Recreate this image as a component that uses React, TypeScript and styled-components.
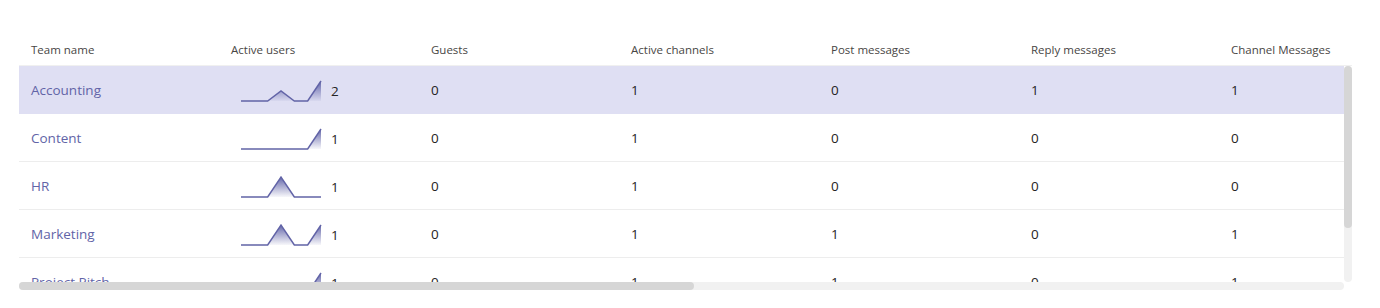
import React from 'react';
import styled, { createGlobalStyle } from 'styled-components';

const GlobalStyle = createGlobalStyle`
  body {
    margin: 0;
    background: #ffffff;
    font-family: 'Open Sans', 'Noto Sans', sans-serif;
    color: #252423;
  }
`;

const COL_W = 200;
const VIEW_W = 1325;
const VIEW_H = 216;
const ROW_H = 48;
const BAR = 8;

interface TeamRow {
  name: string;
  trend: number[];
  activeUsers: number;
  guests: number;
  channels: number;
  posts: number;
  replies: number;
  channelMessages: number;
  urgent: number;
  mentions: number;
  reactions: number;
  meetings: number;
  privacy: string;
  lastActivity: string;
}

const columns = [
  'Team name',
  'Active users',
  'Guests',
  'Active channels',
  'Post messages',
  'Reply messages',
  'Channel Messages',
  'Urgent messages',
  'Mentions',
  'Reactions',
  'Meetings organized',
  'Privacy',
  'Last activity date',
];

const teams: TeamRow[] = [
  { name: 'Accounting', trend: [0, 0, 0, 1, 0, 0, 2], activeUsers: 2, guests: 0, channels: 1, posts: 0, replies: 1, channelMessages: 1, urgent: 0, mentions: 0, reactions: 0, meetings: 0, privacy: 'Private', lastActivity: '3/18/2020' },
  { name: 'Content', trend: [0, 0, 0, 0, 0, 0, 1], activeUsers: 1, guests: 0, channels: 1, posts: 0, replies: 0, channelMessages: 0, urgent: 0, mentions: 0, reactions: 0, meetings: 0, privacy: 'Public', lastActivity: '3/18/2020' },
  { name: 'HR', trend: [0, 0, 0, 1, 0, 0, 0], activeUsers: 1, guests: 0, channels: 1, posts: 0, replies: 0, channelMessages: 0, urgent: 0, mentions: 0, reactions: 0, meetings: 0, privacy: 'Private', lastActivity: '3/15/2020' },
  { name: 'Marketing', trend: [0, 0, 0, 1, 0, 0, 1], activeUsers: 1, guests: 0, channels: 1, posts: 1, replies: 0, channelMessages: 1, urgent: 0, mentions: 1, reactions: 0, meetings: 0, privacy: 'Public', lastActivity: '3/18/2020' },
  { name: 'Project Pitch', trend: [0, 0, 0, 0, 0, 0, 1], activeUsers: 1, guests: 0, channels: 1, posts: 1, replies: 0, channelMessages: 1, urgent: 0, mentions: 0, reactions: 1, meetings: 0, privacy: 'Public', lastActivity: '3/18/2020' },
  { name: 'Sales', trend: [0, 0, 1, 0, 0, 0, 1], activeUsers: 1, guests: 0, channels: 1, posts: 0, replies: 0, channelMessages: 0, urgent: 0, mentions: 0, reactions: 0, meetings: 0, privacy: 'Private', lastActivity: '3/17/2020' },
];

const Page = styled.div`
  padding: 34px 0 0 19px;
`;

const HeaderViewport = styled.div`
  width: ${VIEW_W + BAR}px;
  overflow: hidden;
  border-bottom: 1px solid #f0f0f0;
`;

const Row = styled.div<{ $selected?: boolean }>`
  display: grid;
  grid-template-columns: repeat(${columns.length}, ${COL_W}px);
  width: ${columns.length * COL_W}px;
`;

const HeaderRow = styled(Row)`
  height: 31px;
`;

const HeaderCell = styled.div`
  display: flex;
  align-items: center;
  padding: 0 12px;
  font-size: 11.5px;
  color: #484644;
  white-space: nowrap;
`;

/* body viewport + hand-drawn scrollbars */
const ScrollArea = styled.div`
  display: grid;
  grid-template-columns: ${VIEW_W}px ${BAR}px;
  grid-template-rows: ${VIEW_H}px ${BAR}px;
`;

const Viewport = styled.div`
  overflow: hidden;
`;

const Track = styled.div<{ $vertical?: boolean }>`
  display: flex;
  flex-direction: ${(p) => (p.$vertical ? 'column' : 'row')};
  background: #f1f1f1;
  border-radius: 4px;
`;

const Thumb = styled.div`
  background: #d6d6d6;
  border-radius: 4px;
  flex: none;
`;

const BodyRow = styled(Row)`
  height: ${ROW_H}px;
  box-sizing: border-box;
  border-bottom: 1px solid ${(p) => (p.$selected ? '#dfdff3' : '#ededed')};
  background: ${(p) => (p.$selected ? '#dfdff3' : '#ffffff')};
`;

const Cell = styled.div`
  display: flex;
  align-items: center;
  padding: 0 12px;
  font-size: 13.5px;
  color: #252423;
  white-space: nowrap;
`;

const NameCell = styled(Cell)`
  color: #6264a7;
`;

const SparkCell = styled(Cell)`
  padding-left: 22px;
  padding-top: 3px;
  gap: 10px;
`;

const Sparkline = ({ data, id }: { data: number[]; id: string }) => {
  const w = 80;
  const h = 22;
  const max = Math.max(1, ...data);
  const step = w / (data.length - 1);
  const pts = data.map((v, i) => [i * step, h - 1 - (v / max) * (h - 2)]);
  const line = pts.map(([x, y]) => `${x.toFixed(2)},${y.toFixed(2)}`).join(' ');
  const area = `M0,${h - 1} L${line.split(' ').join(' L')} L${w},${h - 1} Z`;
  return (
    <svg width={w} height={h} viewBox={`0 0 ${w} ${h}`} style={{ overflow: 'visible' }}>
      <defs>
        <linearGradient id={id} x1="0" y1="0" x2="0" y2="1">
          <stop offset="0%" stopColor="#5b5ea6" stopOpacity="0.95" />
          <stop offset="100%" stopColor="#6264a7" stopOpacity="0.05" />
        </linearGradient>
      </defs>
      <path d={area} fill={`url(#${id})`} />
      <polyline points={line} fill="none" stroke="#6264a7" strokeWidth="1.5" strokeLinejoin="miter" />
    </svg>
  );
};

export default function App() {
  const contentW = columns.length * COL_W;
  const contentH = teams.length * ROW_H;
  const hThumb = Math.round((VIEW_W / contentW) * VIEW_W);
  const vThumb = Math.round((VIEW_H / contentH) * VIEW_H);

  return (
    <>
      <GlobalStyle />
      <Page>
        <HeaderViewport>
          <HeaderRow>
            {columns.map((c) => (
              <HeaderCell key={c}>{c}</HeaderCell>
            ))}
          </HeaderRow>
        </HeaderViewport>
        <ScrollArea>
          <Viewport>
            {teams.map((t, i) => (
              <BodyRow key={t.name} $selected={i === 0}>
                <NameCell>{t.name}</NameCell>
                <SparkCell>
                  <Sparkline data={t.trend} id={`spark-${i}`} />
                  <span>{t.activeUsers}</span>
                </SparkCell>
                <Cell>{t.guests}</Cell>
                <Cell>{t.channels}</Cell>
                <Cell>{t.posts}</Cell>
                <Cell>{t.replies}</Cell>
                <Cell>{t.channelMessages}</Cell>
                <Cell>{t.urgent}</Cell>
                <Cell>{t.mentions}</Cell>
                <Cell>{t.reactions}</Cell>
                <Cell>{t.meetings}</Cell>
                <Cell>{t.privacy}</Cell>
                <Cell>{t.lastActivity}</Cell>
              </BodyRow>
            ))}
          </Viewport>
          <Track $vertical>
            <Thumb style={{ height: vThumb }} />
          </Track>
          <Track>
            <Thumb style={{ width: hThumb }} />
          </Track>
        </ScrollArea>
      </Page>
    </>
  );
}
